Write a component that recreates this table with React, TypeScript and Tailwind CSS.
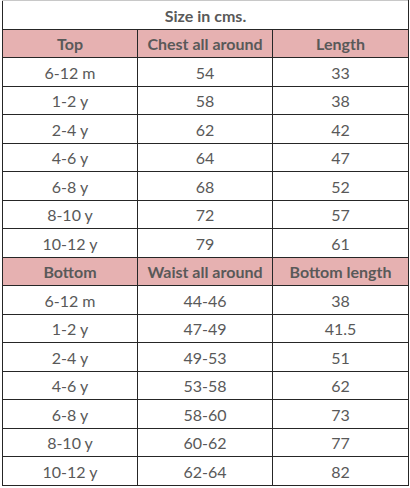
import React from "react";

const top = [
  ["6-12 m", "54", "33"],
  ["1-2 y", "58", "38"],
  ["2-4 y", "62", "42"],
  ["4-6 y", "64", "47"],
  ["6-8 y", "68", "52"],
  ["8-10 y", "72", "57"],
  ["10-12 y", "79", "61"],
];
const bottom = [
  ["6-12 m", "44-46", "38"],
  ["1-2 y", "47-49", "41.5"],
  ["2-4 y", "49-53", "51"],
  ["4-6 y", "53-58", "62"],
  ["6-8 y", "58-60", "73"],
  ["8-10 y", "60-62", "77"],
  ["10-12 y", "62-64", "82"],
];

const cell = "border border-[#262626] text-center align-middle p-0 pt-[2px]";

function Header({ cols }: { cols: string[] }) {
  return (
    <tr className="h-[28.5px] bg-[#e6b1b1]">
      {cols.map((c) => (
        <td key={c} className={cell + " font-bold"}>
          {c}
        </td>
      ))}
    </tr>
  );
}

function Rows({ rows }: { rows: string[][] }) {
  return (
    <>
      {rows.map((r, i) => (
        <tr key={i} className="h-[28.5px] bg-white">
          {r.map((c, j) => (
            <td key={j} className={cell}>
              {c}
            </td>
          ))}
        </tr>
      ))}
    </>
  );
}

export default function App() {
  return (
    <div className="w-[410px] h-[488px] bg-white pl-[2px]">
      <table
        className="w-[406px] border-collapse table-fixed text-[16px] leading-[20px] text-[#595959]"
        style={{ fontFamily: "Lato, 'Open Sans', sans-serif" }}
      >
        <colgroup>
          <col className="w-[135px]" />
          <col className="w-[135px]" />
          <col className="w-[136px]" />
        </colgroup>
        <tbody>
          <tr className="h-[28.5px]">
            <td
              colSpan={3}
              className="border-x border-b border-x-[#262626] border-b-[#262626] border-t border-t-[#c8c8c8] text-center font-bold p-0 pt-[2px]"
            >
              Size in cms.
            </td>
          </tr>
          <Header cols={["Top", "Chest all around", "Length"]} />
          <Rows rows={top} />
          <Header cols={["Bottom", "Waist all around", "Bottom length"]} />
          <Rows rows={bottom} />
        </tbody>
      </table>
    </div>
  );
}
